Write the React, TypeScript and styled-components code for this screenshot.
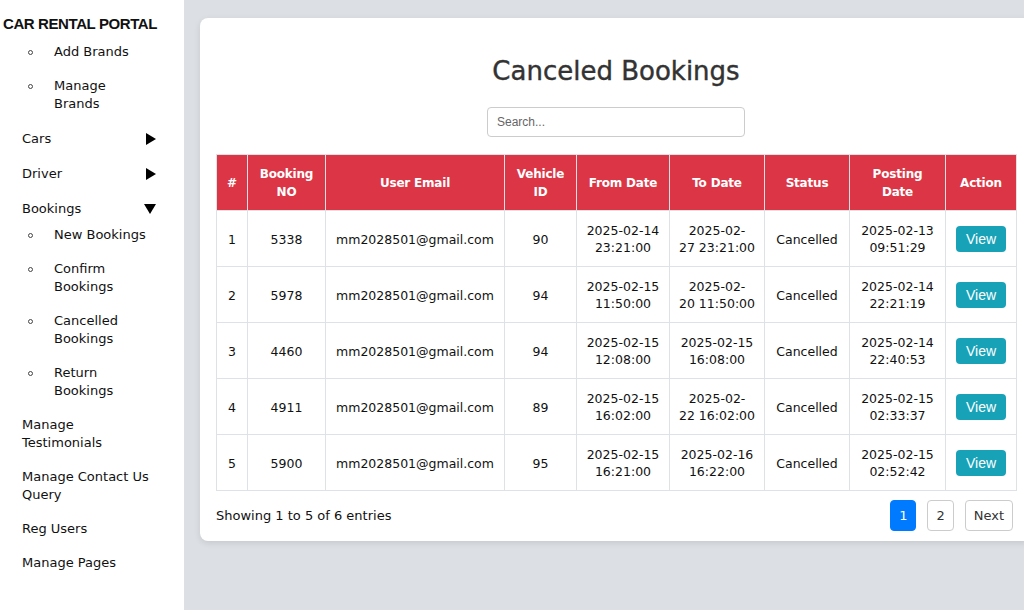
import React from "react";
import styled, { createGlobalStyle } from "styled-components";

const GlobalStyle = createGlobalStyle`
  html, body {
    margin: 0;
    padding: 0;
    height: 610px;
    overflow: hidden;
  }
  body {
    font-family: "DejaVu Sans", "Noto Sans", sans-serif;
    color: #111;
    background: #dcdfe3;
  }
  #root { height: 100%; }
`;

const Page = styled.div`
  display: flex;
  height: 610px;
  width: 100%;
`;

const Sidebar = styled.aside`
  width: 184px;
  flex-shrink: 0;
  background: #fff;
  padding-top: 15px;
  box-sizing: border-box;
`;

const Brand = styled.div`
  font-family: "Liberation Sans", Arial, sans-serif;
  font-weight: 700;
  font-size: 15px;
  letter-spacing: -0.4px;
  line-height: 18px;
  padding-left: 3px;
  margin-bottom: 10px;
  color: #111;
  white-space: nowrap;
`;

const Nav = styled.ul`
  list-style: none;
  margin: 0;
  padding: 0;
`;

const NavLink = styled.li<{ $compact?: boolean }>`
  display: flex;
  justify-content: space-between;
  align-items: center;
  padding: ${(p) => (p.$compact ? "8px 28px 8px 22px" : "9px 28px 8px 22px")};
  font-size: 13px;
  line-height: 18px;
  color: #111;
`;

const SubList = styled.ul`
  list-style: none;
  margin: 0 0 8px;
  padding: 0;
  display: flex;
  flex-direction: column;
  gap: 16px;
`;

const SubItem = styled.li`
  display: flex;
  align-items: flex-start;
  padding-left: 28px;
  font-size: 13px;
  line-height: 18px;
  color: #111;
`;

const Dot = styled.span`
  width: 5px;
  height: 5px;
  box-sizing: border-box;
  border: 1px solid #444;
  border-radius: 50%;
  flex-shrink: 0;
  margin: 6.5px 21px 0 0;
`;

const Main = styled.main`
  flex: 1;
  min-width: 0;
  background: #dcdfe3;
  padding: 18px 0 0 16px;
  overflow: hidden;
`;

const Card = styled.section`
  width: 832px;
  box-sizing: border-box;
  background: #fff;
  border-radius: 8px;
  box-shadow: 0 2px 6px rgba(0, 0, 0, 0.1);
  padding: 16px 16px 10px;
`;

const Title = styled.h2`
  margin: 22px 0 20px;
  text-align: center;
  font-size: 26px;
  font-weight: 400;
  line-height: 31px;
  color: #333;
  -webkit-text-stroke: 0.4px #333;
`;

const SearchRow = styled.div`
  display: flex;
  justify-content: center;
  margin-bottom: 17px;
`;

const SearchInput = styled.input`
  width: 258px;
  height: 30px;
  box-sizing: border-box;
  border: 1px solid #ccc;
  border-radius: 4px;
  padding: 0 9px;
  font-family: "Liberation Sans", Arial, sans-serif;
  font-size: 12px;
  color: #333;
  outline: none;
  &::placeholder {
    color: #666;
  }
`;

const Table = styled.table`
  width: 800px;
  border-collapse: collapse;
  table-layout: fixed;
`;

const Th = styled.th`
  background: #dc3545;
  color: #fff;
  font-weight: 700;
  font-size: 12px;
  letter-spacing: -0.2px;
  line-height: 18px;
  padding: 10px 4px 9px;
  border: 1px solid #dee2e6;
  text-align: center;
  vertical-align: middle;
`;

const Td = styled.td`
  font-size: 12.5px;
  line-height: 17px;
  padding: 11px 4px 10px;
  border: 1px solid #dee2e6;
  text-align: center;
  vertical-align: middle;
  color: #111;
`;

const Line = styled.span`
  display: block;
  white-space: nowrap;
`;

const ViewButton = styled.button`
  background: #17a2b8;
  color: #fff;
  border: none;
  border-radius: 4px;
  font-family: "Liberation Sans", Arial, sans-serif;
  font-size: 14px;
  height: 26px;
  padding: 0 10px;
  cursor: pointer;
`;

const Footer = styled.div`
  display: flex;
  justify-content: space-between;
  align-items: center;
  margin-top: 9px;
`;

const Info = styled.div`
  font-size: 13px;
  color: #111;
`;

const Pager = styled.div`
  display: flex;
  gap: 11px;
  margin-right: 3px;
`;

const PageButton = styled.button<{ $active?: boolean }>`
  height: 31px;
  padding: 0 8px;
  display: flex;
  align-items: center;
  border: 1px solid ${(p) => (p.$active ? "#007bff" : "#ccc")};
  border-radius: 4px;
  background: ${(p) => (p.$active ? "#007bff" : "#fff")};
  color: ${(p) => (p.$active ? "#fff" : "#333")};
  font-family: "DejaVu Sans", sans-serif;
  font-size: 13px;
`;

const Arrow = ({ down }: { down?: boolean }) =>
  down ? (
    <svg width="12" height="10" viewBox="0 0 12 10">
      <polygon points="0,0 12,0 6,10" fill="#000" />
    </svg>
  ) : (
    <svg width="10" height="12" viewBox="0 0 10 12">
      <polygon points="0,0 10,6 0,12" fill="#000" />
    </svg>
  );

const Multi = ({ lines }: { lines: string[] }) => (
  <span>
    {lines.map((l, i) => (
      <Line key={i}>{l}</Line>
    ))}
  </span>
);

const cols = [31, 78, 179, 72, 93, 95, 85, 96, 71];

const headers: string[][] = [
  ["#"],
  ["Booking", "NO"],
  ["User Email"],
  ["Vehicle", "ID"],
  ["From Date"],
  ["To Date"],
  ["Status"],
  ["Posting", "Date"],
  ["Action"],
];

type Row = {
  no: string;
  vid: string;
  from: string[];
  to: string[];
  posted: string[];
};

const rows: Row[] = [
  { no: "5338", vid: "90", from: ["2025-02-14", "23:21:00"], to: ["2025-02-", "27 23:21:00"], posted: ["2025-02-13", "09:51:29"] },
  { no: "5978", vid: "94", from: ["2025-02-15", "11:50:00"], to: ["2025-02-", "20 11:50:00"], posted: ["2025-02-14", "22:21:19"] },
  { no: "4460", vid: "94", from: ["2025-02-15", "12:08:00"], to: ["2025-02-15", "16:08:00"], posted: ["2025-02-14", "22:40:53"] },
  { no: "4911", vid: "89", from: ["2025-02-15", "16:02:00"], to: ["2025-02-", "22 16:02:00"], posted: ["2025-02-15", "02:33:37"] },
  { no: "5900", vid: "95", from: ["2025-02-15", "16:21:00"], to: ["2025-02-16", "16:22:00"], posted: ["2025-02-15", "02:52:42"] },
];

const SubLinks = ({ items }: { items: string[][] }) => (
  <SubList>
    {items.map((lines, i) => (
      <SubItem key={i}>
        <Dot />
        <Multi lines={lines} />
      </SubItem>
    ))}
  </SubList>
);

export default function App() {
  return (
    <>
      <GlobalStyle />
      <Page>
        <Sidebar>
          <Brand>CAR RENTAL PORTAL</Brand>
          <Nav>
            <SubLinks items={[["Add Brands"], ["Manage", "Brands"]]} />
            <NavLink>
              <span>Cars</span>
              <Arrow />
            </NavLink>
            <NavLink>
              <span>Driver</span>
              <Arrow />
            </NavLink>
            <NavLink>
              <span>Bookings</span>
              <Arrow down />
            </NavLink>
            <SubLinks
              items={[
                ["New Bookings"],
                ["Confirm", "Bookings"],
                ["Cancelled", "Bookings"],
                ["Return", "Bookings"],
              ]}
            />
            <NavLink $compact>
              <Multi lines={["Manage", "Testimonials"]} />
            </NavLink>
            <NavLink $compact>
              <Multi lines={["Manage Contact Us", "Query"]} />
            </NavLink>
            <NavLink $compact>
              <span>Reg Users</span>
            </NavLink>
            <NavLink $compact>
              <span>Manage Pages</span>
            </NavLink>
          </Nav>
        </Sidebar>
        <Main>
          <Card>
            <Title>Canceled Bookings</Title>
            <SearchRow>
              <SearchInput placeholder="Search..." />
            </SearchRow>
            <Table>
              <colgroup>
                {cols.map((w, i) => (
                  <col key={i} style={{ width: w }} />
                ))}
              </colgroup>
              <thead>
                <tr>
                  {headers.map((h, i) => (
                    <Th key={i}>
                      <Multi lines={h} />
                    </Th>
                  ))}
                </tr>
              </thead>
              <tbody>
                {rows.map((r, i) => (
                  <tr key={i}>
                    <Td>{i + 1}</Td>
                    <Td>{r.no}</Td>
                    <Td>mm2028501@gmail.com</Td>
                    <Td>{r.vid}</Td>
                    <Td>
                      <Multi lines={r.from} />
                    </Td>
                    <Td>
                      <Multi lines={r.to} />
                    </Td>
                    <Td>Cancelled</Td>
                    <Td>
                      <Multi lines={r.posted} />
                    </Td>
                    <Td>
                      <ViewButton>View</ViewButton>
                    </Td>
                  </tr>
                ))}
              </tbody>
            </Table>
            <Footer>
              <Info>Showing 1 to 5 of 6 entries</Info>
              <Pager>
                <PageButton $active>1</PageButton>
                <PageButton>2</PageButton>
                <PageButton>Next</PageButton>
              </Pager>
            </Footer>
          </Card>
        </Main>
      </Page>
    </>
  );
}
